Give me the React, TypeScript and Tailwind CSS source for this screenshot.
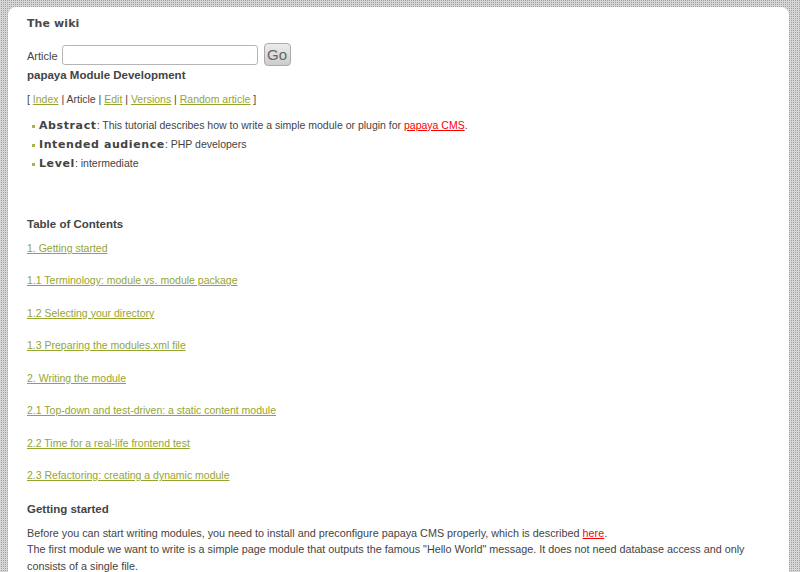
const toc = [
  '1. Getting started',
  '1.1 Terminology: module vs. module package',
  '1.2 Selecting your directory',
  '1.3 Preparing the modules.xml file',
  '2. Writing the module',
  '2.1 Top-down and test-driven: a static content module',
  '2.2 Time for a real-life frontend test',
  '2.3 Refactoring: creating a dynamic module',
];

const facts = [
  { label: 'Abstract', text: 'This tutorial describes how to write a simple module or plugin for ', link: 'papaya CMS' },
  { label: 'Intended audience', text: 'PHP developers' },
  { label: 'Level', text: 'intermediate' },
];

const sans = "font-['Liberation_Sans',Arial,sans-serif]";
const link = 'text-[#95a530] underline';

export default function App() {
  return (
    <div className="h-screen overflow-hidden bg-[conic-gradient(#a2a2a2_0_25%,#d6d6d6_0)] bg-[length:2px_2px] pt-[7px] pl-[8px] pr-[11px]">
      <div className={`h-full rounded-t-[8px] bg-white px-[19px] pt-[9px] text-[10.5px] text-[#444] ${sans}`}>
        {/* Site title */}
        <div className="font-['DejaVu_Sans',sans-serif] text-[11px] leading-[16px] font-bold tracking-[0.1px] text-[#4a4a4a]">
          The wiki
        </div>

        {/* Article search */}
        <form className="mt-[11px] flex h-[23px] items-center" onSubmit={e => e.preventDefault()}>
          <label className="mt-[3px] text-[11px] leading-[16px]">Article</label>
          <input className="ml-[4px] h-[20px] w-[196px] rounded-[3px] border border-[#b5b5b5] bg-white" />
          <button className="ml-[6px] h-[23px] w-[27px] rounded-[4px] border border-[#ababab] bg-gradient-to-b from-[#ececec] to-[#cdcdcd] text-[15px] leading-none text-[#666]">
            Go
          </button>
        </form>

        <h1 className="mt-[1px] text-[11.5px] leading-[16px] font-bold text-[#444]">papaya Module Development</h1>

        <div className="mt-[8px] leading-[16px]">
          [ <a className={link}>Index</a> | Article | <a className={link}>Edit</a> |{' '}
          <a className={link}>Versions</a> | <a className={link}>Random article</a> ]
        </div>

        {/* Summary */}
        <ul className="mt-[10px] pl-[5px]">
          {facts.map(f => (
            <li key={f.label} className="flex h-[19px] items-center">
              <span className="mr-[4px] h-[3px] w-[3px] bg-[#a8b44a]" />
              <span>
                <b className="font-['DejaVu_Sans',sans-serif] text-[11px] font-bold tracking-[0.6px]">{f.label}</b>:{' '}
                {f.text}
                {f.link && (
                  <>
                    <a className="text-[#f00] underline">{f.link}</a>.
                  </>
                )}
              </span>
            </li>
          ))}
        </ul>

        <h2 className="mt-[42px] text-[11.5px] leading-[16px] font-bold">Table of Contents</h2>
        <div className="mt-[8px] flex flex-col gap-[16.43px]">
          {toc.map(t => (
            <a key={t} className={`${link} leading-[16px]`}>
              {t}
            </a>
          ))}
        </div>

        <h2 className="mt-[18px] text-[11.5px] leading-[16px] font-bold">Getting started</h2>
        <p className="mt-[8px] text-[10.8px] leading-[16.5px]">
          Before you can start writing modules, you need to install and preconfigure papaya CMS properly, which is
          described <a className="text-[#f00] underline">here</a>.
          <br />
          The first module we want to write is a simple page module that outputs the famous "Hello World" message. It
          does not need database access and only consists of a single file.
        </p>
      </div>
    </div>
  );
}
